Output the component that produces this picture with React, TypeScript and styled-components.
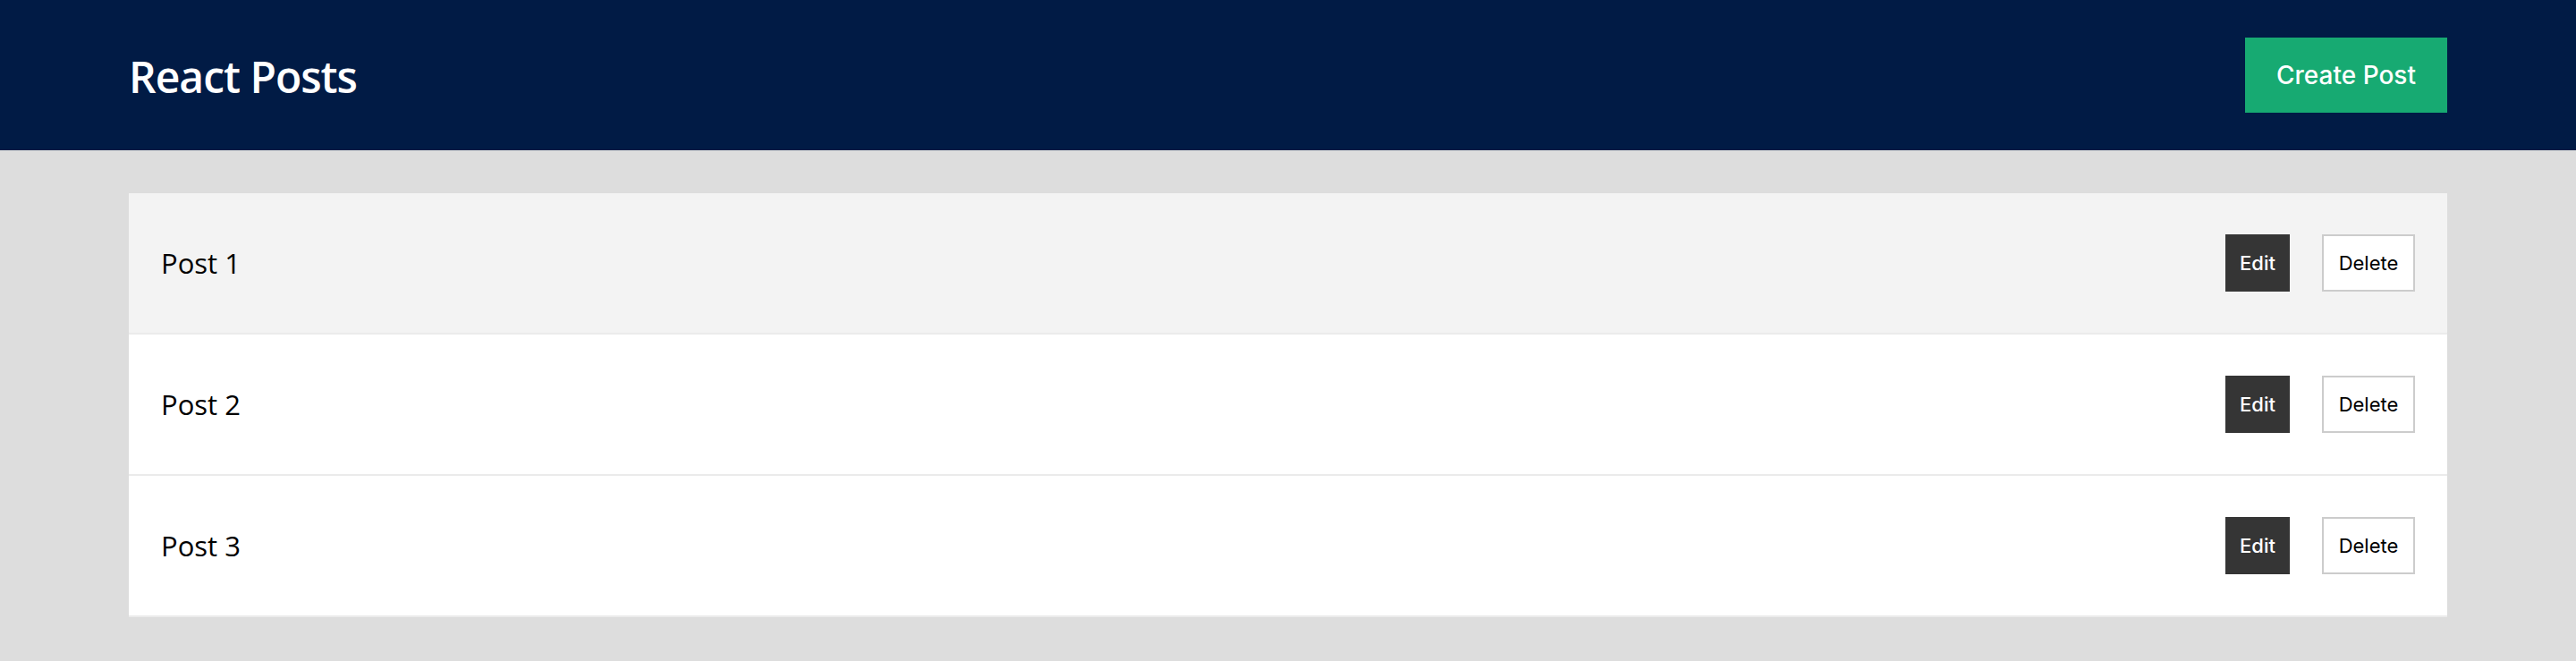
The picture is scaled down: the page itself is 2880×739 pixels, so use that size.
import React from "react";
import styled, { createGlobalStyle } from "styled-components";

const GlobalStyle = createGlobalStyle`
  html, body {
    margin: 0;
    padding: 0;
    background: #dddddd;
  }
  body {
    font-family: "Open Sans", "Noto Sans", sans-serif;
  }
`;

const Page = styled.div`
  background: #dddddd;
`;

const Header = styled.header`
  height: 168px;
  background: #011b45;
  display: flex;
  align-items: center;
  justify-content: space-between;
  padding: 0 144px;
  box-sizing: border-box;
`;

const Title = styled.h1`
  margin: 0;
  color: #ffffff;
  font-family: "Open Sans", sans-serif;
  font-weight: 600;
  font-size: 48px;
  letter-spacing: -1px;
  line-height: 1;
  padding-top: 4px;
`;

const CreateButton = styled.button`
  height: 84px;
  width: 226px;
  border: none;
  border-radius: 0;
  background: #17aa72;
  color: #ffffff;
  font-family: Inter, "Liberation Sans", sans-serif;
  font-size: 28px;
  font-weight: 500;
  cursor: pointer;
`;

const Main = styled.main`
  padding: 48px 144px 49px;
`;

const List = styled.ul`
  list-style: none;
  margin: 0;
  padding: 0;
  background: #ffffff;
`;

const Row = styled.li<{ $active?: boolean }>`
  height: 156px;
  box-sizing: content-box;
  border-bottom: 2px solid #ebebeb;
  background: ${(p) => (p.$active ? "#f3f3f3" : "#ffffff")};
  display: flex;
  align-items: center;
  justify-content: space-between;
  padding: 0 36px;
`;

const PostName = styled.span`
  font-family: "Open Sans", sans-serif;
  font-size: 31px;
  color: #000000;
`;

const Actions = styled.div`
  display: flex;
  align-items: center;
  gap: 36px;
`;

const ActionButton = styled.button<{ $variant: "dark" | "light" }>`
  height: 64px;
  padding: 0 16px;
  box-sizing: border-box;
  border-radius: 0;
  font-family: Inter, "Liberation Sans", sans-serif;
  font-size: 22px;
  font-weight: ${(p) => (p.$variant === "dark" ? 500 : 400)};
  cursor: pointer;
  border: ${(p) => (p.$variant === "dark" ? "none" : "2px solid #cccccc")};
  background: ${(p) => (p.$variant === "dark" ? "#353535" : "#ffffff")};
  color: ${(p) => (p.$variant === "dark" ? "#ffffff" : "#000000")};
  width: ${(p) => (p.$variant === "dark" ? "72px" : "104px")};
`;

const posts = [
  { id: 1, title: "Post 1" },
  { id: 2, title: "Post 2" },
  { id: 3, title: "Post 3" },
];

export default function App() {
  return (
    <Page>
      <GlobalStyle />
      <Header>
        <Title>React Posts</Title>
        <CreateButton>Create Post</CreateButton>
      </Header>
      <Main>
        <List>
          {posts.map((p, i) => (
            <Row key={p.id} $active={i === 0}>
              <PostName>{p.title}</PostName>
              <Actions>
                <ActionButton $variant="dark">Edit</ActionButton>
                <ActionButton $variant="light">Delete</ActionButton>
              </Actions>
            </Row>
          ))}
        </List>
      </Main>
    </Page>
  );
}
